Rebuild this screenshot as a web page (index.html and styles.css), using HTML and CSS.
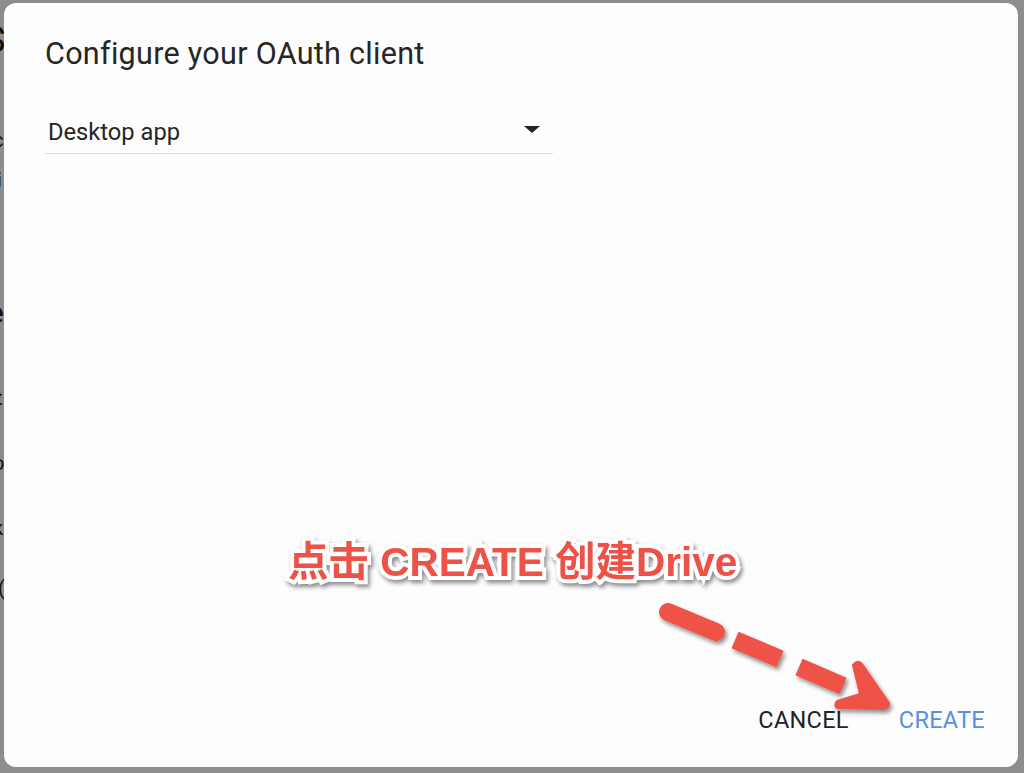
FILE: index.html
```html
<!DOCTYPE html>
<html lang="en">
<head>
<meta charset="utf-8">
<title>Configure your OAuth client</title>
<link rel="stylesheet" href="styles.css">
</head>
<body>
<div class="backdrop-text" aria-hidden="true">
  <span class="bt bt1">S</span>
  <span class="bt bt2">c</span>
  <span class="bt bt3">i</span>
  <span class="bt bt4">e</span>
  <span class="bt bt5">t</span>
  <span class="bt bt6">o</span>
  <span class="bt bt7">k</span>
  <span class="bt bt8">(</span>
</div>
<div class="dialog">
  <h1 class="title">Configure your OAuth client</h1>
  <div class="select">
    <span class="select-value">Desktop app</span>
    <span class="caret"></span>
  </div>
  <div class="spacer"></div>
  <div class="actions">
    <button class="btn btn-cancel">CANCEL</button>
    <button class="btn btn-create">CREATE</button>
  </div>
</div>
<div class="callout">点击 CREATE 创建Drive</div>
<svg class="arrow" width="1024" height="773" viewBox="0 0 1024 773" aria-hidden="true">
  <defs>
    <filter id="sh" x="-20%" y="-20%" width="140%" height="140%">
      <feDropShadow dx="2" dy="3" stdDeviation="2" flood-color="#000" flood-opacity="0.45"/>
    </filter>
  </defs>
  <g filter="url(#sh)" fill="#ef5246" stroke="#ef5246">
    <line x1="668" y1="612" x2="716" y2="632" stroke-width="18" stroke-linecap="round"/>
    <line x1="735" y1="640" x2="780" y2="659" stroke-width="18" stroke-linecap="butt"/>
    <line x1="799" y1="667" x2="843" y2="686" stroke-width="18" stroke-linecap="butt"/>
    <path d="M853 665 Q858 659 862 664 L889 703 Q889 709 883 709 L838 708 Q833 706 837 701 L860 694 Z" stroke-width="2" stroke-linejoin="round"/>
  </g>
</svg>
</body>
</html>
```

FILE: styles.css
```css
html, body {
  margin: 0;
  padding: 0;
}
body {
  width: 1024px;
  height: 773px;
  background: #8d8d8d;
  position: relative;
  overflow: hidden;
  font-family: Roboto, "Liberation Sans", Arial, sans-serif;
}
.backdrop-text {
  position: absolute;
  left: 0;
  top: 0;
  width: 4px;
  height: 773px;
  overflow: hidden;
}
.bt {
  position: absolute;
  left: -7px;
  color: #111;
  font-family: Roboto, sans-serif;
  font-size: 20px;
  line-height: 1;
}
.bt1 { top: 22px; font-size: 36px; left: -16px; }
.bt2 { top: 130px; }
.bt3 { top: 170px; left: -3px; }
.bt4 { top: 298px; font-size: 30px; left: -12px; }
.bt5 { top: 388px; left: -4px; }
.bt6 { top: 453px; }
.bt7 { top: 518px; }
.bt8 { top: 578px; left: -2px; }

.dialog {
  position: absolute;
  left: 4px;
  top: 3px;
  width: 1014px;
  height: 764px;
  box-sizing: border-box;
  background: #fdfdfd;
  border-radius: 12px;
  padding: 34px 33px 34px 40px;
  display: flex;
  flex-direction: column;
}
.title {
  margin: 0;
  padding-left: 1px;
  font-size: 30.5px;
  line-height: 34px;
  font-weight: 400;
  color: #262626;
  letter-spacing: 0.3px;
}
.select {
  margin-top: 48px;
  width: 509px;
  box-sizing: border-box;
  padding: 0 13px 8px 4px;
  border-bottom: 1px solid #dcdcdc;
  display: flex;
  align-items: center;
  justify-content: space-between;
}
.select-value {
  font-size: 23.7px;
  line-height: 26px;
  color: #262626;
}
.caret {
  width: 0;
  height: 0;
  border-left: 8px solid transparent;
  border-right: 8px solid transparent;
  border-top: 7px solid #222;
  margin-top: -6px;
}
.spacer {
  flex: 1;
}
.actions {
  display: flex;
  justify-content: flex-end;
  align-items: center;
  gap: 50px;
}
.btn {
  background: none;
  border: none;
  padding: 0;
  font-family: Roboto, "Liberation Sans", Arial, sans-serif;
  font-size: 23.5px;
  line-height: 26px;
  letter-spacing: 0.3px;
}
.btn-cancel {
  color: #222;
}
.btn-create {
  color: #5a8ee5;
}
.callout {
  position: absolute;
  left: 288px;
  top: 536px;
  font-family: "Liberation Sans", "Noto Sans CJK SC", Arial, sans-serif;
  font-weight: 700;
  font-size: 40.5px;
  line-height: 52px;
  color: #ec5247;
  white-space: nowrap;
  -webkit-text-stroke: 8px #ffffff;
  paint-order: stroke fill;
  filter: drop-shadow(2px 3px 2px rgba(0, 0, 0, 0.45));
}
.arrow {
  position: absolute;
  left: 0;
  top: 0;
}
```
